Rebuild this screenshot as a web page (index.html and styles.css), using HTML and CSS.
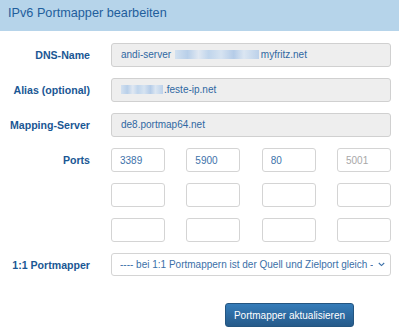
FILE: index.html
```html
<!DOCTYPE html>
<html lang="de">
<head>
<meta charset="utf-8">
<title>IPv6 Portmapper bearbeiten</title>
<link rel="stylesheet" href="styles.css">
</head>
<body>
<header class="panel-head">IPv6 Portmapper bearbeiten</header>
<form class="form">
  <label class="lbl">DNS-Name</label>
  <div class="field ro">andi-server <span class="blur blur-dns"></span>myfritz.net</div>

  <label class="lbl">Alias (optional)</label>
  <div class="field ro"><span class="blur blur-alias"></span>.feste-ip.net</div>

  <label class="lbl">Mapping-Server</label>
  <div class="field ro">de8.portmap64.net</div>

  <label class="lbl lbl-top">Ports</label>
  <div class="ports">
    <input class="port" value="3389">
    <input class="port" value="5900">
    <input class="port" value="80">
    <input class="port" placeholder="5001">
    <input class="port">
    <input class="port">
    <input class="port">
    <input class="port">
    <input class="port">
    <input class="port">
    <input class="port">
    <input class="port">
  </div>

  <label class="lbl">1:1 Portmapper</label>
  <div class="select-wrap">
    <select class="select"><option>---- bei 1:1 Portmappern ist der Quell und Zielport gleich ----</option></select>
    <svg class="chev" width="7" height="5" viewBox="0 0 7 5"><path d="M0.8 1 L3.5 3.6 L6.2 1" fill="none" stroke="#3a6fa8" stroke-width="1.1"/></svg>
  </div>

  <div class="actions">
    <button type="button" class="btn">Portmapper aktualisieren</button>
  </div>
</form>
</body>
</html>
```

FILE: styles.css
```css
* { box-sizing: border-box; }
html, body { margin: 0; padding: 0; background: #fff; }
body { font-family: "Liberation Sans", Arial, sans-serif; width: 399px; height: 332px; overflow: hidden; }

.panel-head {
  height: 31px;
  background: #b6d4ea;
  color: #1f5e9c;
  font-size: 12.7px;
  line-height: 16px;
  padding: 5px 8px 0;
}

.form {
  display: grid;
  grid-template-columns: 90px 280px;
  column-gap: 21px;
  row-gap: 11px;
  padding-top: 12px;
  align-items: center;
}

.lbl {
  text-align: right;
  font-weight: bold;
  font-size: 10.6px;
  color: #1a5794;
  white-space: nowrap;
}
.lbl-top { align-self: start; line-height: 24px; }

.field {
  height: 24px;
  border: 1px solid #d0d0d0;
  border-radius: 3px;
  padding: 0 9px;
  font-size: 10px;
  line-height: 22px;
  color: #2f68a2;
  white-space: nowrap;
  overflow: hidden;
}
.ro { background: #eeeeee; }

.blur {
  display: inline-block;
  height: 9px;
  vertical-align: -1px;
  background: linear-gradient(90deg, #d3e1f0 0%, #b8cfe9 15%, #e0e8f2 28%, #c0d5ec 40%, #d6e3f1 55%, #b5cce8 70%, #dbe6f2 82%, #bcd1ea 100%);
  filter: blur(0.6px);
}
.blur-dns { width: 84px; margin-left: 1px; margin-right: 2px; }
.blur-alias { width: 42px; margin-right: 1px; }

.ports {
  display: grid;
  grid-template-columns: repeat(4, 54px);
  justify-content: space-between;
  row-gap: 11px;
}
.port {
  width: 54px;
  height: 24px;
  border: 1px solid #d4d4d4;
  border-radius: 3px;
  background: #fff;
  padding: 0 8px;
  font-family: "Liberation Sans", Arial, sans-serif;
  font-size: 10px;
  color: #3d72aa;
  outline: none;
}
.port::placeholder { color: #a8a8a8; }

.select-wrap { position: relative; height: 23px; }
.select {
  appearance: none;
  -webkit-appearance: none;
  width: 280px;
  height: 23px;
  border: 1px solid #d4d4d4;
  border-radius: 3px;
  background: #fff;
  padding: 0 17px 0 8px;
  font-family: "Liberation Sans", Arial, sans-serif;
  font-size: 10px;
  color: #3a6fa8;
  outline: none;
}
.chev { position: absolute; right: 6px; top: 9px; }

.actions {
  grid-column: 2;
  margin-top: 16px;
  padding-left: 114px;
}
.btn {
  width: 129px;
  height: 24px;
  border: 1px solid #245580;
  border-radius: 3px;
  background: linear-gradient(#357cb9, #255a8a);
  color: #fff;
  font-family: "Liberation Sans", Arial, sans-serif;
  font-size: 10px;
  padding: 0;
}
```
